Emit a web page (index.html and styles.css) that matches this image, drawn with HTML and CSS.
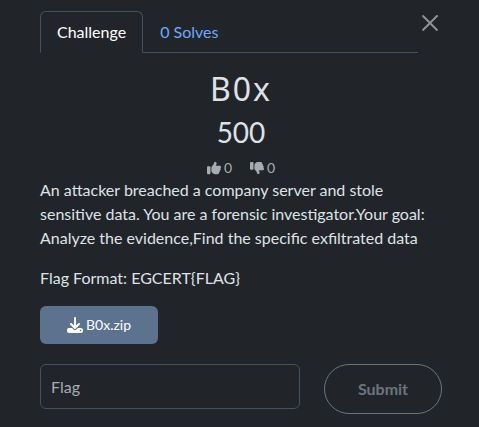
FILE: index.html
```html
<!DOCTYPE html>
<html lang="en">
<head>
<meta charset="utf-8">
<meta name="viewport" content="width=device-width, initial-scale=1">
<title>B0x</title>
<link rel="stylesheet" href="styles.css">
</head>
<body>
<main class="challenge">
  <header class="top">
    <nav class="tabs">
      <a class="tab tab-active" href="#challenge">Challenge</a>
      <a class="tab" href="#solves">0 Solves</a>
    </nav>
    <button class="close" type="button" aria-label="Close">
      <svg viewBox="0 0 16 16" width="16" height="16"><path d="M.3 1.7a1 1 0 0 1 1.4-1.4L8 6.6 14.3.3a1 1 0 1 1 1.4 1.4L9.4 8l6.3 6.3a1 1 0 0 1-1.4 1.4L8 9.4l-6.3 6.3a1 1 0 0 1-1.4-1.4L6.6 8z"/></svg>
    </button>
  </header>
  <h2 class="name">B0x</h2>
  <h3 class="value">500</h3>
  <div class="votes">
    <button class="vote" type="button" aria-label="Like, 0">
      <svg viewBox="0 0 512 512" width="14" height="14"><path d="M313.4 32.9c26 5.2 42.9 30.5 37.7 56.5l-2.3 11.4c-5.3 26.7-15.1 52.1-28.8 75.2H464c26.5 0 48 21.5 48 48c0 18.5-10.5 34.6-25.9 42.6C497 275.4 504 288.9 504 304c0 23.4-16.8 42.9-38.9 47.1c4.4 7.3 6.9 15.8 6.9 24.9c0 21.3-13.9 39.4-33.1 45.6c.7 3.3 1.1 6.8 1.1 10.4c0 26.5-21.5 48-48 48H294.5c-19 0-37.5-5.6-53.3-16.1l-38.5-25.7C176 420.4 160 390.4 160 358.3V247.1c0-29.2 13.3-56.7 36-75l7.4-5.9c26.5-21.2 44.6-51 51.2-84.2l2.3-11.4c5.2-26 30.5-42.9 56.5-37.7zM32 192H96c17.7 0 32 14.3 32 32V448c0 17.7-14.3 32-32 32H32c-17.7 0-32-14.3-32-32V224c0-17.7 14.3-32 32-32z"/></svg>
      <span>0</span>
    </button>
    <button class="vote" type="button" aria-label="Dislike, 0">
      <svg viewBox="0 0 512 512" width="14" height="14"><path transform="matrix(1 0 0 -1 0 512)" d="M313.4 32.9c26 5.2 42.9 30.5 37.7 56.5l-2.3 11.4c-5.3 26.7-15.1 52.1-28.8 75.2H464c26.5 0 48 21.5 48 48c0 18.5-10.5 34.6-25.9 42.6C497 275.4 504 288.9 504 304c0 23.4-16.8 42.9-38.9 47.1c4.4 7.3 6.9 15.8 6.9 24.9c0 21.3-13.9 39.4-33.1 45.6c.7 3.3 1.1 6.8 1.1 10.4c0 26.5-21.5 48-48 48H294.5c-19 0-37.5-5.6-53.3-16.1l-38.5-25.7C176 420.4 160 390.4 160 358.3V247.1c0-29.2 13.3-56.7 36-75l7.4-5.9c26.5-21.2 44.6-51 51.2-84.2l2.3-11.4c5.2-26 30.5-42.9 56.5-37.7zM32 192H96c17.7 0 32 14.3 32 32V448c0 17.7-14.3 32-32 32H32c-17.7 0-32-14.3-32-32V224c0-17.7 14.3-32 32-32z"/></svg>
      <span>0</span>
    </button>
  </div>
  <p class="text">An attacker breached a company server and stole sensitive data. You are a forensic investigator.Your goal: Analyze the evidence,Find the specific exfiltrated data</p>
  <p class="text">Flag Format: EGCERT{FLAG}</p>
  <div class="row files">
    <a class="file" href="#download">
      <svg viewBox="0 0 512 512" width="16" height="16"><path d="M288 32c0-17.7-14.3-32-32-32s-32 14.3-32 32V274.7l-73.4-73.4c-12.5-12.5-32.8-12.5-45.3 0s-12.5 32.8 0 45.3l128 128c12.5 12.5 32.8 12.5 45.3 0l128-128c12.5-12.5 12.5-32.8 0-45.3s-32.8-12.5-45.3 0L288 274.7V32zM64 352c-35.3 0-64 28.7-64 64v32c0 35.3 28.7 64 64 64H448c35.3 0 64-28.7 64-64V416c0-35.3-28.7-64-64-64H346.5l-45.3 45.3c-25 25-65.5 25-90.5 0L165.5 352H64zm368 56a24 24 0 1 1 0 48 24 24 0 1 1 0-48z"/></svg>
      <span>B0x.zip</span>
    </a>
  </div>
  <form class="row">
    <input class="flag" type="text" name="flag" placeholder="Flag" aria-label="Flag">
    <button class="submit" type="submit">Submit</button>
  </form>
</main>
</body>
</html>
```
FILE: styles.css
```css
* {
  box-sizing: border-box;
}

body {
  margin: 0;
  background: #212529;
  color: #dee2e6;
  font: 16px/24px Lato, "Liberation Sans", sans-serif;
}

svg {
  display: block;
  fill: currentColor;
}

button {
  border: 0;
  background: none;
  font: inherit;
}

.challenge {
  padding: 11px 37px 12px 40px;
}

.top {
  display: flex;
  align-items: flex-start;
}

.tabs {
  display: flex;
  flex: 1;
  border-bottom: 1px solid #495057;
}

.tab {
  margin-bottom: -1px;
  padding: 8px 16px;
  border: 1px solid transparent;
  border-radius: 6px 6px 0 0;
  color: #6ea8fe;
  text-decoration: none;
}

.tab-active {
  border-color: #495057 #495057 #212529;
  background: #212529;
  color: #fff;
}

.close {
  padding: 4px;
  color: #909294;
}

.name,
.value {
  margin: 0;
  text-align: center;
  font-weight: 400;
}

.name {
  margin-top: 17px;
  font-family: "Noto Sans", sans-serif;
  font-size: 32px;
  line-height: 38px;
  letter-spacing: 2px;
}

.value {
  margin-top: 7px;
  font-size: 28px;
  line-height: 34px;
}

.votes {
  display: flex;
  justify-content: center;
  gap: 18px;
  margin-top: 8px;
}

.vote {
  display: flex;
  align-items: center;
  gap: 3px;
  padding: 0;
  color: #a7acb1;
  font-size: 14px;
  line-height: 21px;
}

.text {
  margin: 0 0 16px;
}

.row {
  display: grid;
  grid-template-columns: repeat(12, 1fr);
  align-items: start;
  gap: 24px;
}

.files {
  margin-bottom: 20px;
}

.file {
  grid-column: span 4;
  display: flex;
  align-items: center;
  justify-content: center;
  gap: 3px;
  height: 38px;
  border-radius: 6px;
  background: #5d728f;
  color: #fff;
  font-size: 14px;
  text-decoration: none;
}

.flag {
  grid-column: span 8;
  min-width: 0;
  height: 45px;
  padding: 0 10px;
  border: 1px solid #495057;
  border-radius: 6px;
  background: #212529;
  color: #dee2e6;
  font: inherit;
}

.flag::placeholder {
  color: #a7acb1;
}

.submit {
  grid-column: span 4;
  height: 50px;
  padding: 0;
  border: 1px solid #6c757d;
  border-radius: 25px;
  color: #6c757d;
  font-weight: 700;
}
```
